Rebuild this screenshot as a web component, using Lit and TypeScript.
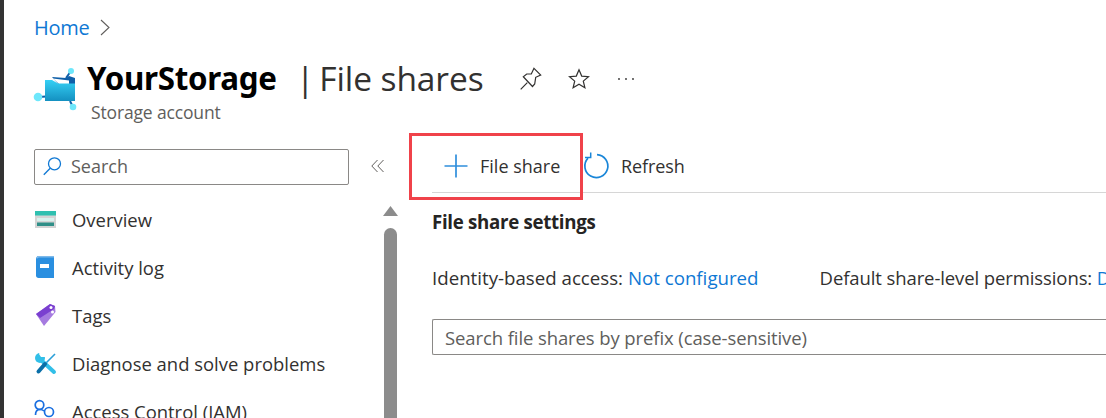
import { LitElement, html, css, svg } from "lit";
import { customElement } from "lit/decorators.js";

const icons = {
  overview: svg`<svg width="24" height="20" viewBox="0 0 24 20"><rect x="1" y="2" width="21" height="17" fill="#d4d4d4"/><rect x="1" y="2" width="21" height="4.500" fill="#2fc0b0"/><rect x="3" y="9" width="17" height="3" fill="#d8f2ee"/><rect x="3" y="13.500" width="17" height="3.500" fill="#2f8f88"/></svg>`,
  log: svg`<svg width="24" height="24" viewBox="0 0 24 24"><path d="M2 4C2 2.500 3 1 4.500 1H20v22H4.500C3 23 2 22 2 20.500Z" fill="#2a8fe0"/><path d="M3.500 1H20v1.500H5.500C4.500 2.500 3.500 3 3 4 2.500 2.500 2.800 1.500 3.500 1Z" fill="#7db9ea"/><rect x="6" y="9" width="9" height="4" fill="#fff"/></svg>`,
  tag: svg`<svg width="24" height="24" viewBox="0 0 24 24"><path d="M2 11 16 1l5 2 .5 6L10 23Z" fill="#a67be0"/><path d="M2 11 16 1l5 2-1 3L6 15Z" fill="#7a3fd0"/><circle cx="17" cy="4.500" r="1.500" fill="#fff"/><circle cx="18.500" cy="9" r="1.500" fill="#fff"/></svg>`,
  tools: svg`<svg width="24" height="24" viewBox="0 0 24 24"><path d="M21 3 12 12" stroke="#2a9fd8" stroke-width="1.600"/><circle cx="6" cy="7" r="5" fill="#32bfe8"/><path d="M7 -1 L13 1 L11 6 L7 6 L5 3Z" fill="#fff"/><path d="M7 9 20 21" stroke="#32bfe8" stroke-width="4" stroke-linecap="round"/><path d="M11 13 4.500 20.500" stroke="#0a6fa8" stroke-width="4" stroke-linecap="round"/></svg>`,
  iam: svg`<svg width="24" height="24" viewBox="0 0 24 24" fill="none" stroke="#1a6fe0" stroke-width="1.700"><circle cx="5.500" cy="6" r="4.300"/><path d="M1.500 16C1.500 12 3.500 10.500 6 10.500c2 0 3 .5 4 1.500"/><circle cx="15" cy="13" r="4.500"/></svg>`,
};

const menu = [
  { icon: icons.overview, label: "Overview" },
  { icon: icons.log, label: "Activity log" },
  { icon: icons.tag, label: "Tags" },
  { icon: icons.tools, label: "Diagnose and solve problems" },
  { icon: icons.iam, label: "Access Control (IAM)" },
];

@customElement("app-root")
export class AppRoot extends LitElement {
  static styles = css`
    :host {
      display: block;
      position: relative;
      width: 1106px;
      height: 418px;
      overflow: hidden;
      background: #fff;
      font-family: "Open Sans", "Noto Sans", sans-serif;
      font-size: 18px;
      color: #323130;
    }
    .shell { display: flex; height: 418px; }
    .edge { width: 4px; flex: none; background: #333; }
    .page { flex: 1; min-width: 0; padding: 14px 0 0 30px; }
    .crumb { display: flex; align-items: center; gap: 11px; height: 26px; color: #0f78d4; font-size: 20px; letter-spacing: -0.300px; }
    .head { display: flex; height: 66px; margin-top: 19px; }
    .logo { width: 48px; flex: none; margin-top: 8px; margin-left: -1px; }
    .names { width: 208px; flex: none; margin-left: 7px; }
    .name { font-family: "Noto Sans", sans-serif; font-weight: 700; font-size: 31.300px; line-height: 38px; color: #000; letter-spacing: -0.300px; height: 38px; margin-left: -1px; white-space: nowrap; }
    .kind { font-size: 17.500px; line-height: 22px; color: #605e5c; margin: 4px 0 0 3px; letter-spacing: -0.150px; }
    .title { display: flex; gap: 5px; font-size: 33.500px; line-height: 38px; color: #323130; letter-spacing: -0.100px; width: 216px; flex: none; white-space: nowrap; }
    .actions { display: flex; align-items: center; height: 34px; gap: 26px; margin-top: 3px; margin-left: 8px; }
    .body { display: flex; margin-top: 24px; }
    .side { width: 315px; flex: none; }
    .search { box-sizing: border-box; height: 36px; border: 1px solid #8a8886; border-radius: 2px; display: flex; align-items: center; gap: 9px; padding: 0 0 2px 8px; color: #605e5c; font-size: 18px; }
    .menu { list-style: none; margin: 10px 0 0; padding: 0; }
    .menu li { display: flex; align-items: center; height: 48px; gap: 14px; font-size: 18.450px; white-space: nowrap; }
    .menu svg { display: block; flex: none; overflow: visible; }
    .rail { width: 48px; flex: none; position: relative; }
    .collapse { position: absolute; left: 22px; top: 10px; }
    .track { position: absolute; left: 35px; top: 57px; width: 13px; display: flex; flex-direction: column; align-items: center; gap: 12px; }
    .thumb { width: 13px; height: 260px; background: #8c8c8c; border-radius: 7px; }
    .main { flex: 1; min-width: 0; padding-left: 35px; }
    .bar { display: flex; align-items: center; box-sizing: border-box; height: 44px; padding-bottom: 10px; border-bottom: 1px solid #d6d6d6; }
    .cmd { display: flex; align-items: center; font-size: 18px; white-space: nowrap; }
    .add { width: 151px; padding-left: 12px; gap: 12px; box-sizing: border-box; }
    .refresh { gap: 12px; letter-spacing: -0.100px; }
    .refresh svg { overflow: visible; }
    h2 { margin: 17px 0 0; font-size: 18.700px; line-height: 24px; font-weight: 700; color: #252423; letter-spacing: -0.300px; }
    .props { display: flex; margin-top: 32px; line-height: 24px; white-space: nowrap; }
    .props a { color: #0f78d4; text-decoration: none; }
    .identity { font-size: 18.700px; }
    .default { font-size: 18.500px; letter-spacing: -0.100px; margin-left: 61px; }
    .filter { box-sizing: border-box; height: 36px; margin-top: 29px; border: 1px solid #8a8886; border-right: 0; border-radius: 2px 0 0 2px; padding-left: 12px; display: flex; align-items: center; color: #605e5c; font-size: 18.500px; letter-spacing: -0.100px; white-space: nowrap; }
    .mark { position: absolute; left: 409px; top: 133px; width: 174px; height: 67px; box-sizing: border-box; border: 3px solid #f0424a; pointer-events: none; }
  `;

  render() {
    return html`
      <div class="shell">
        <div class="edge"></div>
        <div class="page">
          <nav class="crumb">
            <span>Home</span>
            <svg width="10" height="17" viewBox="0 0 10 17" fill="none" stroke="#605e5c" stroke-width="1.100"><path d="M1 1l8 7.500-8 7.500"/></svg>
          </nav>
          <header class="head">
            <div class="logo">
              <svg width="44" height="46" viewBox="0 0 44 46">
                <defs><linearGradient id="fold" x1="0" y1="0" x2="0" y2="1"><stop offset="0" stop-color="#35d0f5"/><stop offset="1" stop-color="#1490c0"/></linearGradient></defs>
                <path d="M33 11 38 4" stroke="#0f5fa8" stroke-width="2"/><path d="M13 29.500 6 30" stroke="#0f5fa8" stroke-width="2"/><path d="M37 34 40 40" stroke="#0f5fa8" stroke-width="2"/>
                <path d="M19 10 33 11 36 9 42 11V18H26Z" fill="#0f5fa8"/><path d="M20 11.500 36 13.500V17H26Z" fill="#fff"/>
                <path d="M12 13H19L25 16.500H42V34H12Z" fill="url(#fold)"/>
                <circle cx="38" cy="4" r="3" fill="#6ee7fb"/><circle cx="5" cy="30" r="4.300" fill="#6ee7fb"/><circle cx="40" cy="40" r="3.300" fill="#6ee7fb"/>
              </svg>
            </div>
            <div class="names">
              <div class="name">YourStorage</div>
              <div class="kind">Storage account</div>
            </div>
            <div class="title"><span>|</span><span>File shares</span></div>
            <div class="actions">
              <svg width="22" height="24" viewBox="0 0 22 24" fill="none" stroke="#323130" stroke-width="1.200"><path d="M.7 22.300 7.300 15.700M14 1.300 20.700 8 15.700 10.300 14.700 17 12.500 19.500 3.300 9.700 6.700 7H11.300Z"/></svg>
              <svg width="22" height="22" viewBox="0 0 22 22" fill="none" stroke="#323130" stroke-width="1.200"><path d="M11 1.800l2.700 6.300 6.800.6-5.200 4.400 1.600 6.700L11 16.300l-5.900 3.500 1.600-6.700L1.500 8.700l6.800-.6Z"/></svg>
              <svg width="20" height="6" viewBox="0 0 20 6" fill="#323130"><circle cx="3" cy="3" r=".9"/><circle cx="10" cy="3" r=".9"/><circle cx="17" cy="3" r=".9"/></svg>
            </div>
          </header>
          <div class="body">
            <aside class="side">
              <div class="search">
                <svg width="19" height="19" viewBox="0 0 19 19" fill="none" stroke="#0f78d4" stroke-width="1.300"><circle cx="11.500" cy="6.800" r="6"/><path d="M7.200 11.200 .8 17.800"/></svg>
                <span>Search</span>
              </div>
              <ul class="menu">
                ${menu.map((m) => html`<li>${m.icon}<span>${m.label}</span></li>`)}
              </ul>
            </aside>
            <div class="rail">
              <svg class="collapse" width="13" height="14" viewBox="0 0 13 14" fill="none" stroke="#605e5c" stroke-width="1"><path d="M6.500 1 .8 7l5.700 6M12.500 1 6.800 7l5.700 6"/></svg>
              <div class="track">
                <svg width="15" height="10" viewBox="0 0 15 10"><path d="M7.500 0 15 10H0Z" fill="#8c8c8c"/></svg>
                <div class="thumb"></div>
              </div>
            </div>
            <main class="main">
              <div class="bar">
                <div class="cmd add">
                  <svg width="24" height="24" viewBox="0 0 24 24" stroke="#2f8fdc" stroke-width="1.700"><path d="M12 .5v23M.5 12h23"/></svg>
                  <span>File share</span>
                </div>
                <div class="cmd refresh">
                  <svg width="26" height="26" viewBox="0 0 26 26" fill="none" stroke="#1a86d8" stroke-width="1.700"><path d="M14 1.600A11.500 11.500 0 1 1 5 5.200"/><path d="M7.700 -.5V4.500H2" stroke-width="1.500"/></svg>
                  <span>Refresh</span>
                </div>
              </div>
              <h2>File share settings</h2>
              <div class="props">
                <span class="identity">Identity-based access: <a>Not configured</a></span>
                <span class="default">Default share-level permissions: <a>Disabled</a></span>
              </div>
              <div class="filter">Search file shares by prefix (case-sensitive)</div>
            </main>
          </div>
        </div>
      </div>
      <div class="mark"></div>
    `;
  }
}
